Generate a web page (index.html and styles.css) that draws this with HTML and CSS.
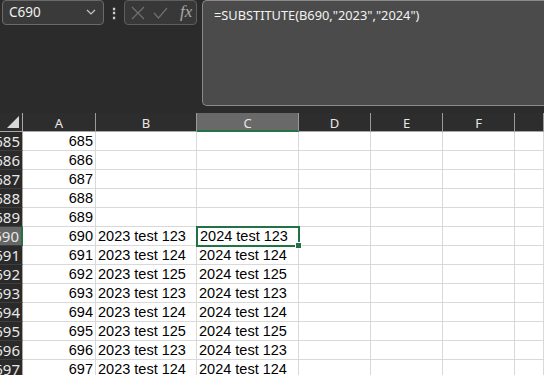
FILE: index.html
```html
<!DOCTYPE html>
<html lang="en">
<head>
  <meta charset="UTF-8">
  <title>Sheet</title>
  <link rel="stylesheet" href="styles.css">
</head>
<body>
  <!-- formula bar -->
  <div class="topbar">
    <div class="namebox">
      <span>C690</span>
      <svg width="10" height="6" viewBox="0 0 10 6"><path d="M1 1 L5 5 L9 1" fill="none" stroke="#c8c8c8" stroke-width="1.2"/></svg>
    </div>
    <div class="dots">⋮</div>
    <div class="fxbox">
      <svg width="14" height="14" viewBox="0 0 14 14"><path d="M1 1 L13 13 M13 1 L1 13" stroke="#707070" stroke-width="1.2"/></svg>
      <svg width="15" height="12" viewBox="0 0 15 12"><path d="M1 6 L5.5 11 L14 1" fill="none" stroke="#707070" stroke-width="1.2"/></svg>
      <span class="fx">fx</span>
    </div>
    <div class="formula">=SUBSTITUTE(B690,"2023","2024")</div>
  </div>

  <!-- sheet -->
  <div class="sheet" id="sheet">
    <div class="corner"><div class="tri"></div></div>
    <div class="colhead">A</div>
    <div class="colhead">B</div>
    <div class="colhead active">C</div>
    <div class="colhead">D</div>
    <div class="colhead">E</div>
    <div class="colhead">F</div>
    <div class="colhead"></div>
  </div>

  <script>
    const sheet = document.getElementById("sheet");
    const bVals = { 690: "123", 691: "124", 692: "125", 693: "123", 694: "124", 695: "125", 696: "123", 697: "124" };

    for (let r = 685; r <= 697; r++) {
      const head = document.createElement("div");
      head.className = "rowhead" + (r === 690 ? " active" : "");
      head.innerHTML = "<span>" + r + "</span>";
      sheet.appendChild(head);

      const a = document.createElement("div");
      a.className = "cell num";
      a.innerText = r;
      sheet.appendChild(a);

      const b = document.createElement("div");
      b.className = "cell";
      b.innerText = bVals[r] ? "2023 test " + bVals[r] : "";
      sheet.appendChild(b);

      const c = document.createElement("div");
      c.className = "cell" + (r === 690 ? " selected" : "");
      c.innerText = bVals[r] ? "2024 test " + bVals[r] : "";
      if (r === 690) {
        const h = document.createElement("div");
        h.className = "handle";
        c.appendChild(h);
      }
      sheet.appendChild(c);

      for (let i = 0; i < 4; i++) {
        const e = document.createElement("div");
        e.className = "cell";
        sheet.appendChild(e);
      }
    }
  </script>
</body>
</html>
```
FILE: styles.css
```css
body {
  margin: 0;
  background: #2b2b2b;
  width: 544px;
  height: 375px;
  overflow: hidden;
  font-family: "Noto Sans", "Liberation Sans", sans-serif;
}

.topbar {
  display: flex;
  align-items: flex-start;
  height: 113px;
  padding-left: 2px;
  box-sizing: border-box;
}

.namebox {
  width: 102px;
  height: 25px;
  box-sizing: border-box;
  border: 1px solid #6a6a6a;
  border-radius: 4px;
  background: #3a3a3a;
  color: #f0f0f0;
  font-size: 13.5px;
  display: flex;
  align-items: center;
  justify-content: space-between;
  padding: 0 7px 1px 6px;
}

.dots {
  width: 20px;
  text-align: center;
  color: #d8d8d8;
  font-size: 14px;
  line-height: 25px;
  font-weight: bold;
}

.fxbox {
  width: 73px;
  height: 25px;
  box-sizing: border-box;
  border: 1px solid #5e5e5e;
  border-radius: 4px;
  background: #383838;
  display: flex;
  align-items: center;
  gap: 8px;
  padding-left: 6px;
}

.fx {
  font-family: "Liberation Serif", serif;
  font-style: italic;
  font-size: 17px;
  color: #a8a8a8;
  margin-left: 4px;
  margin-top: -2px;
}

.formula {
  margin-left: 5px;
  flex: 1;
  height: 106px;
  box-sizing: border-box;
  border: 1px solid #8a8a8a;
  border-right: none;
  border-radius: 5px 0 0 5px;
  background: #4b4b4b;
  color: #f2f2f2;
  font-size: 12.8px;
  padding: 5px 11px;
}

.sheet {
  display: grid;
  grid-template-columns: 23px 73px 101px 102px 72px 72px 72px 1fr;
  grid-auto-rows: 19px;
  background: #ffffff;
}

.corner, .colhead {
  background: #2d2d2d;
  border-bottom: 1px solid #a8a8a8;
  box-sizing: border-box;
}

.corner {
  border-right: 1px solid #a8a8a8;
  position: relative;
}

.tri {
  position: absolute;
  right: 3px;
  bottom: 3px;
  width: 0;
  height: 0;
  border-left: 12px solid transparent;
  border-bottom: 12px solid #d8d8d8;
}

.colhead {
  color: #e8e8e8;
  font-size: 13px;
  text-align: center;
  line-height: 19px;
  border-right: 1px solid #9a9a9a;
  padding-top: 1px;
}

.colhead.active {
  background: #696969;
  border-bottom: 2px solid #217346;
  line-height: 18px;
}

.rowhead {
  background: #2a2a2a;
  border-right: 1px solid #a8a8a8;
  border-bottom: 1px solid #3e3e3e;
  box-sizing: border-box;
  color: #e8e8e8;
  font-size: 15px;
  display: flex;
  justify-content: flex-end;
  align-items: center;
  overflow: hidden;
  padding-right: 2px;
}

.rowhead span {
  white-space: nowrap;
}

.rowhead.active {
  background: #666666;
  border-right: 2px solid #217346;
}

.cell {
  border-right: 1px solid #d9d9d9;
  border-bottom: 1px solid #d9d9d9;
  box-sizing: border-box;
  font-family: "Liberation Sans", sans-serif;
  font-size: 14.5px;
  line-height: 19px;
  color: #000;
  padding: 0 2px;
  white-space: nowrap;
  overflow: hidden;
}

.cell.num {
  text-align: right;
}

.cell.selected {
  position: relative;
  overflow: visible;
  border: 2px solid #217346;
  margin: -1px 0 0 -1px;
  width: 104px;
  height: 21px;
  line-height: 17px;
  padding-left: 2px;
  z-index: 1;
}

.handle {
  position: absolute;
  right: -4px;
  bottom: -4px;
  width: 5px;
  height: 5px;
  background: #217346;
  border: 1px solid #fff;
}
```
